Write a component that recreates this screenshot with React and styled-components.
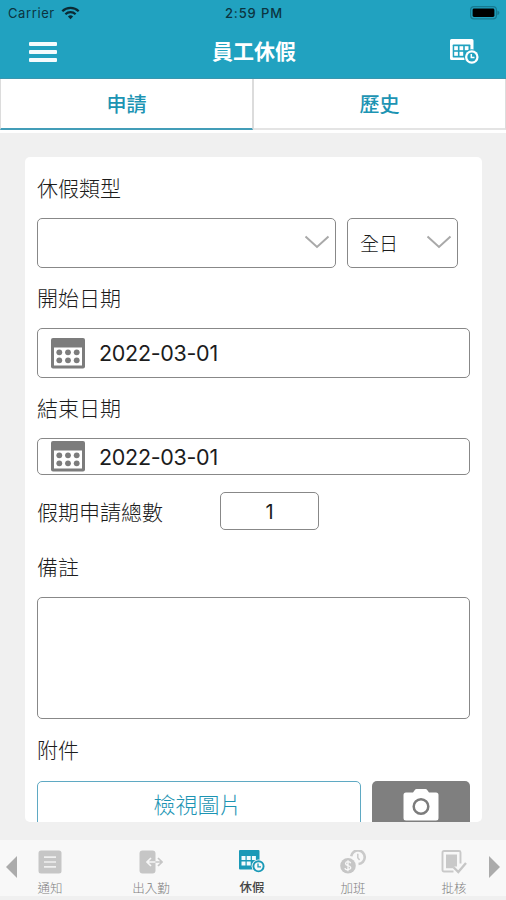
import React, { useState } from "react";
import styled, { createGlobalStyle } from "styled-components";

const tabs = ["申請", "歷史"];

const menu = [
  { id: "notice", label: "通知" },
  { id: "attendance", label: "出入勤" },
  { id: "leave", label: "休假" },
  { id: "overtime", label: "加班" },
  { id: "approval", label: "批核" },
];

const WifiIcon = () => (
  <svg width="19" height="14" viewBox="0 0 19 14" fill="none" stroke="#0b2a33">
    <path d="M1.3 5.2a11.6 11.6 0 0 1 16.4 0" strokeWidth="2.3" />
    <path d="M4.4 8.3a7.2 7.2 0 0 1 10.2 0" strokeWidth="2.2" />
    <path d="M9.5 13.2 6.9 10.6a3.7 3.7 0 0 1 5.2 0Z" fill="#0b2a33" stroke="none" />
  </svg>
);

const BatteryIcon = () => (
  <svg width="30" height="14" viewBox="0 0 30 14">
    <rect x="0.6" y="0.6" width="25.8" height="12.3" rx="3.4" fill="none" stroke="#167a91" strokeWidth="1.2" />
    <rect x="2.6" y="2.6" width="21.8" height="8.3" rx="1.4" fill="#000" />
    <path d="M27.4 4.4q2 .8 2 2.4t-2 2.4z" fill="#167a91" />
  </svg>
);

const LeaveIcon = ({ color, back, width }) => (
  <svg width={width} height={(width * 25) / 29} viewBox="0 0 29 25">
    <path d="M1.5 0h20.5a1.5 1.5 0 0 1 1.5 1.5V21h-22A1.5 1.5 0 0 1 0 19.5v-18A1.5 1.5 0 0 1 1.5 0Z" fill={color} />
    <rect x="2.7" y="5.6" width="17.7" height="12.8" rx="0.6" fill={back} />
    <g fill={color}>
      <rect x="4.2" y="7.2" width="3.7" height="4" />
      <rect x="9.5" y="7.2" width="3.7" height="4" />
      <rect x="14.8" y="7.2" width="3.7" height="4" />
      <rect x="4.2" y="12.8" width="3.7" height="4" />
      <rect x="9.5" y="12.8" width="3.7" height="4" />
    </g>
    <circle cx="21.8" cy="18" r="7.8" fill={back} />
    <circle cx="21.8" cy="18" r="6.8" fill={color} />
    <circle cx="21.8" cy="18" r="4.5" fill={back} />
    <path d="M21.3 15v3.6h3.2" fill="none" stroke={color} strokeWidth="1.5" />
  </svg>
);

/* bottom bar version: white cells on a solid sheet */
const LeaveMenuIcon = () => (
  <svg width="26" height="23" viewBox="0 0 26 23">
    <rect width="20.500" height="19.5" rx="1" fill="#1a99b7" />
    <g fill="#f4fbfd">
      {[2.5, 7.700, 12.900].map((x) => (
        <rect key={x} x={x} y="6" width="4" height="4" />
      ))}
      {[2.5, 7.700].map((x) => (
        <rect key={x} x={x} y="11.5" width="4" height="4" />
      ))}
    </g>
    <circle cx="19.5" cy="16.3" r="6.9" fill="#f8f8f8" />
    <circle cx="19.5" cy="16.3" r="5.1" fill="#f8f8f8" stroke="#1a99b7" strokeWidth="1.9" />
    <path d="M19 13.5v3.300h3" fill="none" stroke="#1a99b7" strokeWidth="1.3" />
  </svg>
);

const CalendarIcon = () => (
  <svg width="34" height="31" viewBox="0 0 34 31">
    <rect width="34" height="30.5" rx="2" fill="#7c7c7c" />
    <rect x="3" y="9.5" width="28" height="18" fill="#fff" />
    <g fill="#7c7c7c">
      {[14.3, 22.3].map((y) =>
        [8.3, 17, 25.7].map((x) => <circle key={`${x}-${y}`} cx={x} cy={y} r="2.900" />)
      )}
    </g>
  </svg>
);

const ChevronIcon = () => (
  <svg width="26" height="14" viewBox="0 0 26 14" fill="none" stroke="#a9a9a9" strokeWidth="2">
    <path d="M1.5 1.5 13 12 24.5 1.5" />
  </svg>
);

const CameraIcon = () => (
  <svg width="36" height="32" viewBox="0 0 36 32">
    <path
      d="M3 3.5h7l2-2.7q.5-.8 1.5-.8h9q1 0 1.500.8l2 2.700h7q2.500 0 2.500 2.500v23q0 2.500-2.500 2.500H3Q.5 31.500.5 29V6Q.5 3.500 3 3.500Z"
      fill="#fff"
    />
    <circle cx="18" cy="17.5" r="7.3" fill="#fff" stroke="#7c7c7c" strokeWidth="2.5" />
  </svg>
);

const NoticeIcon = () => (
  <svg width="24" height="24" viewBox="0 0 24 24">
    <rect x="0.5" y="0.5" width="23" height="23" rx="2.5" fill="#c6c6c6" />
    <path d="M6 7.2h12M6 12h12M6 16.8h12" stroke="#f0f0f0" strokeWidth="1.7" />
  </svg>
);

const AttendanceIcon = () => (
  <svg width="24" height="24" viewBox="0 0 24 24" fill="none">
    <rect x="0.5" y="0.5" width="16" height="23" rx="3" fill="#c6c6c6" />
    <path d="M8 12h8.5M12 8l-4 4 4 4" stroke="#f6f6f6" strokeWidth="1.7" />
    <path d="M16.5 12h6M19 8l4 4-4 4" stroke="#c6c6c6" strokeWidth="1.7" />
  </svg>
);

const OvertimeIcon = () => (
  <svg width="26" height="24" viewBox="0 0 26 24" fill="none">
    <path d="M11.2 6.2A6.800 6.800 0 1 1 18.500 14" stroke="#cacaca" strokeWidth="2.6" />
    <path d="M17.800 3.8v4l1.800 2.200" stroke="#cacaca" strokeWidth="1.5" />
    <circle cx="8" cy="15.700" r="7.8" fill="#c6c6c6" />
    <path
      d="M10.7 13.200q-.5-1.500-2.700-1.500t-2.500 1.900q0 1.500 2.500 2t2.700 2.100-2.700 2-2.900-1.600M8 10.200v11"
      stroke="#f8f8f8"
      strokeWidth="1.3"
    />
  </svg>
);

const ApprovalIcon = () => (
  <svg width="26" height="24" viewBox="0 0 26 24" fill="none">
    <path d="M12.5 21.5H3Q1.5 21.5 1.5 20V2.5Q1.5 1 3 1h15q1.5 0 1.5 1.5v11" stroke="#c9c9c9" strokeWidth="1.9" />
    <path d="M5 4.5h11v12h-2.5l-1 1.700H5z" fill="#c9c9c9" />
    <path d="m12.8 17.5 4.5 4.500 7.700-9" stroke="#c6c6c6" strokeWidth="2.4" />
  </svg>
);

const MenuIcon = ({ id }) => {
  if (id === "notice") return <NoticeIcon />;
  if (id === "attendance") return <AttendanceIcon />;
  if (id === "overtime") return <OvertimeIcon />;
  if (id === "approval") return <ApprovalIcon />;
  return <LeaveMenuIcon />;
};

export default function App() {
  const [tab, setTab] = useState("申請");
  const [page, setPage] = useState("leave");
  const [remark, setRemark] = useState("");

  return (
    <Screen>
      <GlobalStyle />
      <Header>
        <StatusBar>
          <Carrier>
            Carrier <WifiIcon />
          </Carrier>
          <Clock>2:59 PM</Clock>
          <BatteryIcon />
        </StatusBar>
        <TitleBar>
          <Burger aria-label="menu">
            <span />
            <span />
            <span />
          </Burger>
          <Title>員工休假</Title>
          <LeaveIcon color="#fff" back="#21a2c0" width={29} />
        </TitleBar>
      </Header>

      <Tabs>
        {tabs.map((t) => (
          <Tab key={t} $active={t === tab} onClick={() => setTab(t)}>
            {t}
          </Tab>
        ))}
      </Tabs>

      <Content>
        <Card>
          <Label $height={61}>休假類型</Label>
          <SelectRow>
            <Select $width={299}>
              <span />
              <ChevronIcon />
            </Select>
            <Select $width={111}>
              <span>全日</span>
              <ChevronIcon />
            </Select>
          </SelectRow>
          <Label $height={60}>開始日期</Label>
          <DateField $height={50}>
            <CalendarIcon />
            2022-03-01
          </DateField>
          <Label $height={60}>結束日期</Label>
          <DateField $height={37}>
            <CalendarIcon />
            2022-03-01
          </DateField>
          <TotalRow>
            <TotalLabel $height={38}>假期申請總數</TotalLabel>
            <Total>1</Total>
          </TotalRow>
          <RemarkLabel $height={67}>備註</RemarkLabel>
          <Remark value={remark} onChange={(e) => setRemark(e.target.value)} />
          <Label $height={62}>附件</Label>
          <FileRow>
            <ViewButton>檢視圖片</ViewButton>
            <CameraButton aria-label="camera">
              <CameraIcon />
            </CameraButton>
          </FileRow>
        </Card>
      </Content>

      <BottomBar>
        <Arrow viewBox="0 0 11 22" $side="left">
          <path d="M11 0v22L0 11z" />
        </Arrow>
        {menu.map((item) => (
          <MenuItem key={item.id} $active={item.id === page} onClick={() => setPage(item.id)}>
            <MenuIconBox>
              <MenuIcon id={item.id} />
            </MenuIconBox>
            {item.label}
          </MenuItem>
        ))}
        <Arrow viewBox="0 0 11 22" $side="right">
          <path d="M0 0v22l11-11z" />
        </Arrow>
      </BottomBar>
    </Screen>
  );
}

const GlobalStyle = createGlobalStyle`
  * {
    box-sizing: border-box;
  }
  body {
    margin: 0;
    background: #f0f0f0;
  }
  body, button, textarea {
    font-family: Inter, "Noto Sans CJK TC", sans-serif;
  }
  svg {
    display: block;
    flex-shrink: 0;
  }
`;

const Screen = styled.div`
  width: 506px;
  height: 900px;
  display: flex;
  flex-direction: column;
  overflow: hidden;
  background: #f0f0f0;
`;

const Header = styled.header`
  height: 79px;
  background: #21a2c0;
  border-bottom: 1px solid #3a96ae;
`;

const StatusBar = styled.div`
  height: 26px;
  display: grid;
  grid-template-columns: 1fr auto 1fr;
  align-items: center;
  padding: 0 6px 0 8px;
  font-size: 13px;
  color: #0b3440;

  > svg {
    justify-self: end;
  }
`;

const Carrier = styled.div`
  display: flex;
  align-items: center;
  gap: 6px;
  letter-spacing: 0.6px;
`;

const Clock = styled.div`
  font-weight: 500;
  letter-spacing: 0.9px;
`;

const TitleBar = styled.div`
  height: 51px;
  display: grid;
  grid-template-columns: 1fr auto 1fr;
  align-items: center;
  padding: 0 27px 0 29px;

  > svg {
    justify-self: end;
  }
`;

const Burger = styled.button`
  width: 28px;
  padding: 0;
  border: 0;
  background: none;
  display: flex;
  flex-direction: column;
  gap: 4px;

  span {
    height: 4px;
    border-radius: 1px;
    background: #f4fbfd;
  }
`;

const Title = styled.h1`
  margin: 0;
  padding-top: 1px;
  font-size: 21px;
  line-height: 30px;
  font-weight: 700;
  color: #fff;
`;

const Tabs = styled.div`
  height: 54px;
  padding-bottom: 3px;
  background: #fff;
  display: flex;
`;

const Tab = styled.button`
  flex: 1;
  padding: 1px 0 2px;
  border: 1px solid #dcdcdc;
  border-top: 0;
  border-bottom: 2px solid ${(props) => (props.$active ? "#439db8" : "#e4e4e4")};
  background: #fff;
  color: #1c94b3;
  font-size: 20px;
  font-weight: 500;
`;

const Content = styled.main`
  flex: 1;
  min-height: 0;
  padding: 24px 24px 18px 25px;
`;

const Card = styled.section`
  height: 100%;
  overflow: hidden;
  padding: 0 12px;
  border-radius: 5px;
  background: #fff;
`;

const Label = styled.div`
  height: ${(props) => props.$height}px;
  padding-bottom: 2px;
  display: flex;
  align-items: center;
  font-size: 21px;
  font-weight: 300;
  color: #1c1c1c;
`;

const SelectRow = styled.div`
  display: flex;
  gap: 11px;
`;

const Field = styled.div`
  border: 1px solid #888;
  border-radius: 5px;
  background: #fff;
  color: #1c1c1c;
`;

const Select = styled(Field)`
  width: ${(props) => props.$width}px;
  height: 50px;
  padding: 0 5px 2px 12px;
  display: flex;
  align-items: center;
  justify-content: space-between;
  font-size: 19px;
  font-weight: 300;
`;

const DateField = styled(Field)`
  height: ${(props) => props.$height}px;
  padding-left: 13px;
  display: flex;
  align-items: center;
  gap: 14px;
  font-size: 21.5px;
  letter-spacing: -0.3px;
`;

const TotalRow = styled.div`
  display: flex;
  align-items: center;
  padding-top: 17px;
`;

const TotalLabel = styled(Label)`
  width: 183px;
  padding-bottom: 0;
`;

const Total = styled(Field)`
  width: 99px;
  height: 38px;
  padding-top: 1px;
  display: flex;
  align-items: center;
  justify-content: center;
  font-size: 20px;
`;

const RemarkLabel = styled(Label)`
  padding: 5px 0 0;
`;

const Remark = styled.textarea`
  display: block;
  width: 100%;
  height: 122px;
  border: 1px solid #888;
  border-radius: 5px;
  resize: none;
  outline: none;
  font-size: 20px;
`;

const FileRow = styled.div`
  display: flex;
  gap: 11px;
`;

const ViewButton = styled.button`
  width: 324px;
  height: 50px;
  padding: 0 3px 6px 0;
  border: 1px solid #5fa9c3;
  border-radius: 5px;
  background: #fff;
  color: #1c94b3;
  font-size: 22px;
  font-weight: 300;
`;

const CameraButton = styled.button`
  flex: 1;
  height: 50px;
  padding: 0 0 3px;
  border: 0;
  border-radius: 5px;
  background: #7f7f7f;
  display: flex;
  align-items: center;
  justify-content: center;
`;

const BottomBar = styled.nav`
  position: relative;
  height: 60px;
  border-bottom: 4px solid #f0f0f0;
  background: #f8f8f8;
  display: flex;
  justify-content: center;
`;

const MenuItem = styled.button`
  width: 101px;
  flex-shrink: 0;
  margin: 0 1px 0 -1px;
  padding: 10px 0 0;
  border: 0;
  background: none;
  display: flex;
  flex-direction: column;
  align-items: center;
  gap: 7px;
  font-size: 12.5px;
  line-height: 16px;
  font-weight: ${(props) => (props.$active ? 500 : 300)};
  color: ${(props) => (props.$active ? "#444" : "#808080")};
`;

const MenuIconBox = styled.span`
  height: 24px;
  display: flex;
  align-items: center;
`;

/* paging arrows float over the first and last menu items */
const Arrow = styled.svg`
  position: absolute;
  top: 16px;
  ${(props) => props.$side}: 6px;
  width: 11px;
  height: 22px;
  fill: #ababab;
`;
